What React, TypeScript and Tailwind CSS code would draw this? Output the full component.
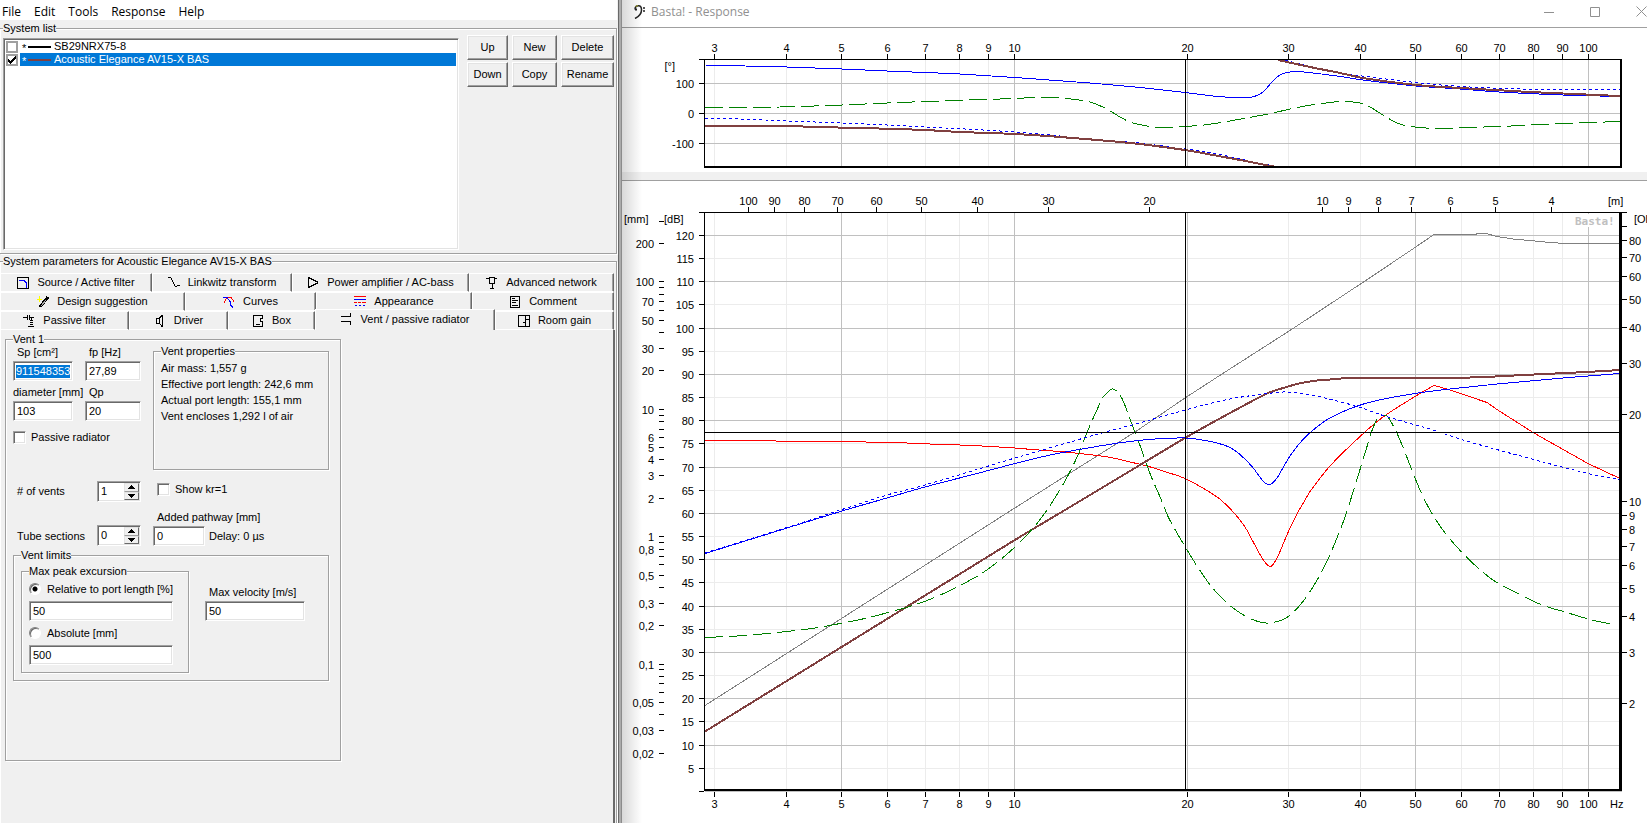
import {type ReactNode, useState} from "react";

const BEVEL_IN = "border border-t-[#a0a0a0] border-l-[#a0a0a0] border-r-white border-b-white shadow-[inset_1px_1px_0_#696969,inset_-1px_-1px_0_#e3e3e3] bg-white";
const BEVEL_OUT = "border border-t-white border-l-white border-r-[#696969] border-b-[#696969] shadow-[inset_-1px_-1px_0_#a0a0a0,inset_1px_1px_0_#e3e3e3] bg-[#f0f0f0]";
const ETCHED = "border border-[#a0a0a0] shadow-[1px_1px_0_#fff,inset_1px_1px_0_#fff]";

const MENU = ["File", "Edit", "Tools", "Response", "Help"];

/* ---------- form pieces ---------- */

type GroupProps = { title: string; className: string; children: ReactNode };

const Group = ({title, className, children}: GroupProps) => (
    <fieldset className={`min-w-0 ${ETCHED} ${className}`}>
        <legend className="h-3 bg-[#f0f0f0] leading-3 whitespace-nowrap">{title}</legend>
        {children}
    </fieldset>
);

type FieldProps = { id: string; label: string; value: string; width: string; indent?: boolean };

const Field = ({id, label, value, width, indent}: FieldProps) => (
    <div className={`flex flex-col gap-[2px] ${width}`}>
        <label htmlFor={id} className={`h-[14px] leading-[14px] whitespace-nowrap ${indent ? "pl-1" : ""}`}>{label}</label>
        <input id={id} defaultValue={value} className={`h-5 w-full px-[3px] outline-none ${BEVEL_IN}`}/>
    </div>
);

const Check = ({id, label}: { id: string; label: string }) => (
    <div className="flex h-[13px] items-center gap-[5px]">
        <input id={id} type="checkbox" className={`size-[13px] appearance-none ${BEVEL_IN}`}/>
        <label htmlFor={id}>{label}</label>
    </div>
);

const Radio = ({id, label, on}: { id: string; label: string; on?: boolean }) => (
    <div className="flex h-[14px] items-center gap-[6px]">
        <input
            id={id}
            type="radio"
            name="excursion"
            defaultChecked={on}
            className="size-3 appearance-none rounded-full border border-t-[#808080] border-l-[#808080] border-r-white border-b-white bg-white shadow-[inset_1px_1px_0_#696969] checked:bg-[radial-gradient(circle,#000_2px,#fff_3px)]"
        />
        <label htmlFor={id}>{label}</label>
    </div>
);

const Spinner = ({id, value}: { id: string; value: number }) => {
    const [count, setCount] = useState(value);

    return (
        <div className={`flex h-[21px] w-11 p-px ${BEVEL_IN}`}>
            <input
                id={id}
                value={count}
                onChange={(e) => setCount(Number(e.target.value) || 0)}
                className="w-[25px] pl-[2px] outline-none"
            />
            <div className="flex w-[15px] flex-col">
                <button type="button" aria-label="More" onClick={() => setCount(count + 1)} className="flex flex-1 items-center justify-center border border-[#e3e3e3] border-r-[#696969] border-b-[#a0a0a0] bg-[#f0f0f0]">
                    <svg width="7" height="4" shapeRendering="crispEdges"><path d="M3 0h1v1h1v1h1v1h1v1H0V3h1V2h1V1h1z"/></svg>
                </button>
                <button type="button" aria-label="Less" onClick={() => setCount(Math.max(0, count - 1))} className="flex flex-1 items-center justify-center border border-[#e3e3e3] border-r-[#696969] border-b-[#696969] bg-[#f0f0f0]">
                    <svg width="7" height="4" shapeRendering="crispEdges"><path d="M0 0h7v1H6v1H5v1H4v1H3V3H2V2H1V1H0z"/></svg>
                </button>
            </div>
        </div>
    );
};

/* ---------- system list ---------- */

const SystemRow = ({id, name, color, on}: { id: string; name: string; color: string; on: boolean }) => (
    <li className="flex h-[13px] items-center gap-[2px]">
        <input id={id} type="checkbox" defaultChecked={on} className="size-3 appearance-none border-2 border-[#a0a0a0] bg-white"/>
        {on && (
            <svg width="8" height="8" shapeRendering="crispEdges" className="pointer-events-none -ml-3 mr-[2px]">
                <path d="M0 3h1v1h1v1h1V4h1V3h1V2h1V1h1V0h1v3H7v1H6v1H5v1H4v1H3v1H2V7H1V6H0z"/>
            </svg>
        )}
        <label htmlFor={id} className={`flex h-[13px] flex-1 items-center leading-[13px] ${on ? "bg-[#0078d7] text-white" : ""}`}>
            <span className="w-2 pt-[3px] pl-[2px]">*</span>
            <svg width="26" height="2" shapeRendering="crispEdges"><path d="M0 1h23" stroke={color} strokeWidth="2"/></svg>
            {name}
        </label>
    </li>
);

const LIST_BUTTONS = ["Up", "New", "Delete", "Down", "Copy", "Rename"];

/* ---------- tabs ---------- */

const ICONS: Record<string, ReactNode> = {
    source: <><path d="M.5.5h11v11H.5z" stroke="#000"/><path d="M2 3.500h5l2 2v2l1 3" stroke="#00f"/></>,
    linkwitz: <path d="M0 .5h2.500l2 3 2 5 1 1h1.500M9 8.500h3" stroke="#000"/>,
    amp: <path d="M1.500.5v10M1.500.5l9 4.500v1l-9 4.500" stroke="#000"/>,
    network: <path d="M0 1.500h3M3.500.5h5v6h-5zM9 1.500h2M6.500 6v5M4 11.500h4" stroke="#000"/>,
    wand: <><path d="M3 11 11 1" stroke="#000" strokeWidth="3"/><path d="M4 10 9 4" stroke="#aaa"/><path d="M2.500 0v6M0 3.500h5" stroke="#ff0"/></>,
    curves: <><path d="M1 6.500 4 1.500h4l3 4" stroke="#f00"/><path d="M0 1.500h4l3 4v3l3 3" stroke="#00f"/></>,
    appearance: <><path d="M0 .5h12M0 6.500h3m1 0h3m1 0h4" stroke="#f00"/><path d="M0 3.500h12M1 9.500h2m2 0h2m2 0h2" stroke="#00f"/></>,
    comment: <path d="M1.500.5h9v11h-9zM3 2.500h3M3 4.500h6M3 6.500h4M3 9.500h6" stroke="#000"/>,
    passive: <path d="M0 2.500h4M4.500 0v5M6.500 0v5M7 2.500h4M8.500 3v2M7 5.500h3M7 7.500h3M7 9.500h3M5 11.500h6" stroke="#000"/>,
    driver: <path d="M2.500 3.500h3v5h-3zM5.500 3 8 .5v11L5.500 8.500" stroke="#000"/>,
    box: <path d="M1.500.5h9v3h-2v3h2v5h-9zM4 9.500h4" stroke="#000"/>,
    vent: <path d="M9.500 0v4M0 3.500h10M0 8.500h10M9.500 8v4" stroke="#000"/>,
    room: <path d="M.5.5h11v11H.5zM7.500 0v12M8 4.500h4M5 7.500h3" stroke="#000"/>,
};

const TABS = [
    [
        {icon: "source", title: "Source / Active filter", width: "basis-[152px]"},
        {icon: "linkwitz", title: "Linkwitz transform", width: "basis-[140px]"},
        {icon: "amp", title: "Power amplifier / AC-bass", width: "basis-[177px]"},
        {icon: "network", title: "Advanced network", width: "basis-[145px]"},
    ],
    [
        {icon: "wand", title: "Design suggestion", width: "basis-[185px]"},
        {icon: "curves", title: "Curves", width: "basis-[131px]"},
        {icon: "appearance", title: "Appearance", width: "basis-[156px]"},
        {icon: "comment", title: "Comment", width: "basis-[142px]"},
    ],
    [
        {icon: "passive", title: "Passive filter", width: "basis-[129px]"},
        {icon: "driver", title: "Driver", width: "basis-[99px]"},
        {icon: "box", title: "Box", width: "basis-[87px]"},
        {icon: "vent", title: "Vent / passive radiator", width: "basis-[180px]", active: true},
        {icon: "room", title: "Room gain", width: "basis-[119px]"},
    ],
];

const Tabs = () => (
    <div role="tablist" className="mr-[2px] pt-[6px]">
        {TABS.map((row, i) => (
            <div key={i} className="flex h-[19px]">
                {row.map((tab) => (
                    <button
                        key={tab.title}
                        type="button"
                        role="tab"
                        aria-selected={!!tab.active}
                        className={`flex shrink grow items-center justify-center gap-2 border-t border-l border-r border-white border-r-[#696969] shadow-[inset_-1px_0_0_#a0a0a0] whitespace-nowrap ${tab.width} ${tab.active ? "-mt-[2px] bg-[#f0f0f0] pb-[2px]" : "border-b"}`}
                    >
                        <svg width="12" height="12" fill="none" shapeRendering="crispEdges">{ICONS[tab.icon]}</svg>
                        <span>{tab.title}</span>
                    </button>
                ))}
            </div>
        ))}
    </div>
);

/* ---------- vent page ---------- */

const VentPage = () => (
    <div className="mr-px flex-1 border-r-2 border-[#696969] pt-[3px] pl-[5px]">
        <Group title="Vent 1" className="h-[428px] w-[336px] px-[7px]">
            <div className="flex gap-3">
                <div className="w-32">
                    <div className="flex flex-wrap gap-x-3 gap-y-1">
                        <div className="flex w-[60px] flex-col gap-[2px]">
                            <label htmlFor="sp" className="h-[14px] pl-1 leading-[14px]">Sp [cm²]</label>
                            <div className={`flex h-5 w-full items-center px-[2px] ${BEVEL_IN}`}>
                                <input id="sp" defaultValue="911548353" className="h-[13px] w-full bg-[#0078d7] text-white outline-none"/>
                            </div>
                        </div>
                        <Field id="fp" label="fp [Hz]" value="27,89" width="w-14" indent/>
                        <Field id="diameter" label="diameter [mm]" value="103" width="w-[60px]"/>
                        <Field id="qp" label="Qp" value="20" width="w-14" indent/>
                    </div>
                    <div className="mt-[10px]"><Check id="passive" label="Passive radiator"/></div>
                </div>
                <Group title="Vent properties" className="h-[125px] w-44 px-[7px]">
                    <div className="pt-[3px] leading-4 whitespace-nowrap">
                        <p>Air mass: 1,557 g</p>
                        <p>Effective port length: 242,6 mm</p>
                        <p>Actual port length: 155,1 mm</p>
                        <p>Vent encloses 1,292 l of air</p>
                    </div>
                </Group>
            </div>

            <div className="mt-[11px] flex items-center">
                <label htmlFor="vents" className="w-[84px] pl-1"># of vents</label>
                <Spinner id="vents" value={1}/>
                <div className="pl-4 pb-1"><Check id="kr" label="Show kr=1"/></div>
            </div>

            <div className="mt-2 flex items-end">
                <label htmlFor="sections" className="w-[84px] pl-1 leading-5">Tube sections</label>
                <Spinner id="sections" value={0}/>
                <div className="pl-3"><Field id="pathway" label="Added pathway [mm]" value="0" width="w-[52px]" indent/></div>
                <span className="pl-1 leading-5">Delay: 0 µs</span>
            </div>

            <Group title="Vent limits" className="mt-[3px] h-[132px] w-[316px] px-[7px]">
                <div className="flex gap-4 pt-1">
                    <Group title="Max peak excursion" className="h-[108px] w-[168px] px-[7px]">
                        <div className="flex flex-col gap-[5px] pt-[5px]">
                            <Radio id="relative" label="Relative to port length [%]" on/>
                            <input aria-label="Relative to port length" defaultValue="50" className={`h-5 w-36 px-[3px] outline-none ${BEVEL_IN}`}/>
                            <Radio id="absolute" label="Absolute [mm]"/>
                            <input aria-label="Absolute" defaultValue="500" className={`h-5 w-36 px-[3px] outline-none ${BEVEL_IN}`}/>
                        </div>
                    </Group>
                    <div className="pt-5"><Field id="velocity" label="Max velocity [m/s]" value="50" width="w-[100px]" indent/></div>
                </div>
            </Group>
        </Group>
    </div>
);

const MainWindow = () => (
    <div className="flex w-[619px] shrink-0 flex-col border-r border-[#696969] bg-[#f0f0f0] pr-px">
        <nav className="flex h-5 items-center gap-[13px] bg-white pt-1 pl-[2px] font-['Open_Sans',sans-serif] text-xs leading-4">
            {MENU.map((item) => <button key={item} type="button">{item}</button>)}
        </nav>

        <Group title="System list" className="mt-[2px] h-[232px] border-l-0 pl-[3px]">
            <div className="flex gap-2">
                <ul className={`mt-1 h-[212px] flex-1 px-[2px] pt-px ${BEVEL_IN}`}>
                    <SystemRow id="sys1" name="SB29NRX75-8" color="#000" on={false}/>
                    <SystemRow id="sys2" name="Acoustic Elegance AV15-X BAS" color="#804040" on/>
                </ul>
                <div className="mt-px mr-[2px] grid grid-cols-[41px_45px_53px] content-start gap-x-1 gap-y-[2px]">
                    {LIST_BUTTONS.map((name) => (
                        <button key={name} type="button" className={`h-[25px] ${BEVEL_OUT}`}>{name}</button>
                    ))}
                </div>
            </div>
        </Group>

        <fieldset className={`mt-px flex min-w-0 flex-1 flex-col border-b-0 border-l-0 ${ETCHED}`}>
            <legend className="ml-[3px] h-3 bg-[#f0f0f0] leading-3">System parameters for Acoustic Elegance AV15-X BAS</legend>
            <div className="flex h-full flex-col">
                <Tabs/>
                <VentPage/>
            </div>
        </fieldset>
    </div>
);

/* ---------- response window ---------- */

const FREQS = [3, 4, 5, 6, 7, 8, 9, 10, 20, 30, 40, 50, 60, 70, 80, 90, 100];
const MAJOR_FREQS = [5, 10, 20, 50, 100];
const METRES = [100, 90, 80, 70, 60, 50, 40, 30, 20, 10, 9, 8, 7, 6, 5, 4];
const OHMS = [80, 70, 60, 50, 40, 30, 20, 10, 9, 8, 7, 6, 5, 4, 3, 2];
const MM_LABELS = ["200", "100", "70", "50", "30", "20", "10", "6", "5", "4", "3", "2", "1", "0,8", "0,5", "0,3", "0,2", "0,1", "0,05", "0,03", "0,02"];
const MM_TICKS = [300, 200, 100, ...[10, 1, 0.1].flatMap((d) => [9, 8, 7, 6, 5, 4, 3, 2, 1].map((n) => n * d)), 0.09, 0.08, 0.07, 0.06, 0.05, 0.04, 0.03, 0.02];

const snap = (v: number) => Math.floor(v) + 0.5;
const freqX = (f: number) => snap(1014.7 + 574 * Math.log10(f / 10));
const degY = (d: number) => snap(113.5 - 0.3 * d);
const dbY = (db: number) => snap(791.5 - 4.634 * db);
const mmY = (mm: number) => snap(536.7 - 127.4 * Math.log10(mm));
const ohmY = (ohm: number) => snap(501.8 - 289 * Math.log10(ohm / 10));

const PHASE = {
    maroonLow: "705,126 787,126 815,127 862,128 895,129 925,130 960,132 1015,134 1060,137 1130,143 1185,150 1213,155 1240,160 1276,167",
    maroonHigh: "1278,60 1310,67 1340,73 1363,78 1416,85 1460,88 1530,92 1620,96",
    dotLow: "705,119 740,119 787,121 842,123 887,125 925,127 965,129 1015,132 1060,136 1100,140 1130,142 1185,149 1213,153 1240,159 1278,167",
    dotHigh: "1285,60 1300,64 1330,71 1370,77 1430,84 1470,87 1520,89 1560,89.500 1620,89.500",
    blue: "705,65 745,66 787,67 842,69 887,71 925,72.500 960,74 1015,77.500 1090,83 1130,86.500 1163,90 1185,92.500 1213,96 1233,97.500 1250,97.500 1258,95 1264,91 1273,81 1280,75 1287,72.500 1297,71.500 1313,73 1337,76 1363,80 1416,86 1460,89 1499,92 1563,95 1620,96.500",
    green: "705,108 780,107 842,105 887,103 940,101 985,99.500 1015,98.500 1035,97.500 1055,97.500 1075,99.500 1090,102 1105,108 1120,117 1130,122 1139,124.500 1155,127 1175,127 1185,126.500 1208,124.500 1241,119 1273,113 1290,109 1308,105.500 1330,102.500 1343,101.500 1360,103 1370,107 1378,112 1395,122 1403,125 1420,127.500 1440,128.500 1465,127.500 1500,126.500 1563,123.500 1620,121.500",
};

const LEVEL = {
    gray: "705,705.500 1014,508.500 1135,432 1185,398 1222,374 1293,328.500 1365,281 1415,247.500 1434,234.500 1476,234.500 1477,233.500 1486,233.500 1497,236.500 1513,239 1535,241 1550,242.500 1565,243.500 1620,243.500",
    maroon: "705,731.500 1014,540.500 1065,510 1130,471 1185,438 1230,413 1268,393 1280,389 1297,384 1313,381 1330,379.500 1350,378 1452,378 1495,376.500 1523,375 1587,372 1620,370",
    red: "705,440.500 838,441.500 893,442.500 930,444 960,445 982,446 1015,448 1032,449.500 1065,452 1108,457 1130,462 1147,466 1163,471 1185,478.500 1207,490.500 1221,500 1235,514 1245,527 1253,541.500 1262,558 1266,563.500 1270,566.500 1273,564.500 1278,556 1288,532.500 1297,514 1305,500 1310,491.500 1330,466 1360,436.500 1383,417 1420,393.500 1434,385.500",
    redTail: "1434,385.500 1447,389 1487,402.500 1497,409.500 1533,432.500 1588,463.500 1620,478.500",
    blue: "705,553.500 787,528 842,511 880,500 925,487 977,473.500 1015,463.500 1048,455.500 1082,449 1115,443.500 1130,441.500 1155,439 1185,438 1202,440 1217,443 1230,447.500 1240,454.500 1252,466.500 1263,481 1268,484.500 1272,483.500 1277,478 1290,456 1303,439.500 1320,424.500 1330,418 1353,407.500 1377,400.500 1415,393.500 1450,389 1497,384 1563,378 1620,373.500",
    dotted: "705,553 787,527.500 842,509.500 887,495 925,485 977,469.500 1015,458 1065,443.500 1100,433.500 1130,425.500 1150,420 1185,410 1230,399 1268,393.500 1283,392 1297,393 1323,397.500 1357,406.500 1383,415.500 1433,430 1463,440 1530,458.500 1588,473.500 1620,479.500",
    green: "705,637.500 745,635.500 787,631.500 818,627.500 865,618.500 888,612.500 913,605.500 938,596 962,584.500 986,570.500 1010,551.500 1032,529.500 1048,508.500 1065,481 1078,455 1088,430 1098,407.500 1102,398.500 1108,392 1112,389 1116,390.500 1122,398.500 1128,413.500 1135,432.500 1140,445.500 1150,473.500 1162,501.500 1168,516.500 1182,541.500 1197,566 1213,588.500 1230,605.500 1247,617 1262,622.500 1273,622.500 1287,617.500 1303,601.500 1318,578.500 1330,554.500 1343,522.500 1349,505 1360,469.500 1367,446.500 1372,430.500 1377,419.500 1382,415.500 1387,416 1392,423.500 1400,440 1420,490 1432,513.500 1447,535.500 1470,560.500 1493,580 1517,593 1542,605 1565,612 1590,619.500 1613,624.500",
};

// cubic through all points, tangents taken from the neighbours
const smoothPath = (points: string) => {
    const p = points.split(" ").map((pair) => pair.split(",").map(Number));
    const slope = (i: number) => {
        const a = p[Math.max(0, i - 1)];
        const b = p[Math.min(p.length - 1, i + 1)];
        return (b[1] - a[1]) / (b[0] - a[0]);
    };

    return p.slice(1).reduce((d, [x, y], i) => {
        const [px, py] = p[i];
        const h = (x - px) / 3;
        return `${d}C${px + h} ${py + slope(i) * h} ${x - h} ${y - slope(i + 1) * h} ${x} ${y}`;
    }, `M${p[0][0]} ${p[0][1]}`);
};

type CurveProps = { points: string; color: string; width?: number; dash?: string; straight?: boolean };

const Curve = ({points, color, width = 1, dash, straight}: CurveProps) => (
    <path
        d={straight ? `M${points}` : smoothPath(points)}
        fill="none"
        stroke={color}
        strokeWidth={width}
        strokeDasharray={dash}
        shapeRendering="crispEdges"
    />
);

const PhaseChart = () => (
    <svg viewBox="622 28 1025 144" className="block h-auto w-full">
        <g shapeRendering="crispEdges">
            {FREQS.map((f) => (
                <path key={f} d={`M${freqX(f)} 60V166`} stroke={MAJOR_FREQS.includes(f) ? "#c0c0c0" : "#ececec"}/>
            ))}
            {[100, 0, -100].map((d) => <path key={d} d={`M705 ${degY(d)}H1620`} stroke="#c0c0c0"/>)}
        </g>
        <Curve points={PHASE.green} color="#008000" dash="18 6"/>
        <Curve points={PHASE.dotLow} color="#0000ff" dash="3 3"/>
        <Curve points={PHASE.dotHigh} color="#0000ff" dash="3 3"/>
        <Curve points={PHASE.blue} color="#0000ff"/>
        <Curve points={PHASE.maroonLow} color="#804040" width={2}/>
        <Curve points={PHASE.maroonHigh} color="#804040" width={2}/>
        <g stroke="#000" shapeRendering="crispEdges">
            <path d="M699 59.500H1621M704.500 59V167M1185.500 60V166"/>
            <path d="M704 167H1622M1621 59V168" strokeWidth="2"/>
            {FREQS.map((f) => <path key={f} d={`M${freqX(f)} 54V59`}/>)}
            {[100, 0, -100].map((d) => <path key={d} d={`M699 ${degY(d)}H704`}/>)}
        </g>
        <g textAnchor="middle">
            {FREQS.map((f) => <text key={f} x={freqX(f)} y="52">{f}</text>)}
        </g>
        <g textAnchor="end">
            {[100, 0, -100].map((d) => <text key={d} x="694" y={degY(d) + 4}>{d}</text>)}
            <text x="675" y="70">[°]</text>
        </g>
    </svg>
);

const DB_STEPS = Array.from({length: 24}, (_, i) => 120 - i * 5);

const LevelChart = () => (
    <svg viewBox="622 181 1025 642" className="block h-auto w-full">
        <g shapeRendering="crispEdges">
            {DB_STEPS.filter((db) => db % 10).map((db) => <path key={db} d={`M705 ${dbY(db)}H1621`} stroke="#ececec"/>)}
            {FREQS.map((f) => (
                <path key={f} d={`M${freqX(f)} 213V790`} stroke={MAJOR_FREQS.includes(f) ? "#c0c0c0" : "#ececec"}/>
            ))}
            {DB_STEPS.filter((db) => db % 10 === 0).map((db) => <path key={db} d={`M705 ${dbY(db)}H1621`} stroke="#c0c0c0"/>)}
        </g>
        <rect x="1573" y="214" width="44" height="13" fill="#fff"/>
        <text x="1575" y="225" fill="#c0c0c0" className="font-['DejaVu_Sans_Mono',monospace] font-bold">Basta!</text>
        <Curve points={LEVEL.gray} color="#808080" straight/>
        <Curve points={LEVEL.red} color="#ff0000"/>
        <Curve points={LEVEL.redTail} color="#ff0000" straight/>
        <Curve points={LEVEL.maroon} color="#804040" width={2}/>
        <Curve points={LEVEL.green} color="#008000" dash="18 6"/>
        <Curve points={LEVEL.dotted} color="#0000ff" dash="3 3"/>
        <Curve points={LEVEL.blue} color="#0000ff"/>
        <g stroke="#000" shapeRendering="crispEdges">
            <path d="M699 212.500H1621M704.500 212V791M1185.500 213V791M705 432.500H1620M699 791.500H704"/>
            <path d="M704 790H1622" strokeWidth="2"/>
            <path d="M1620.500 212V791" strokeWidth="3"/>
            <path d="M705 791.500H1622" stroke="#c0c0c0"/>
            {FREQS.map((f) => <path key={f} d={`M${freqX(f)} 792V797`}/>)}
            {METRES.map((m) => <path key={m} d={`M${freqX(344 / m)} 207V212`}/>)}
            {DB_STEPS.map((db) => <path key={db} d={`M699 ${dbY(db)}H704`}/>)}
            {MM_TICKS.map((mm) => <path key={mm} d={`M659 ${mmY(mm)}H664`}/>)}
            {[100, 90, ...OHMS].map((ohm) => <path key={ohm} d={`M1622 ${ohmY(ohm)}H1627`}/>)}
        </g>
        <g textAnchor="middle">
            {FREQS.map((f) => <text key={f} x={freqX(f)} y="808">{f}</text>)}
            {METRES.map((m) => <text key={m} x={freqX(344 / m)} y="205">{m}</text>)}
        </g>
        <g textAnchor="end">
            {DB_STEPS.map((db) => <text key={db} x="694" y={dbY(db) + 4}>{db}</text>)}
            {MM_LABELS.map((mm) => <text key={mm} x="654" y={mmY(Number(mm.replace(",", "."))) + 4}>{mm}</text>)}
        </g>
        {OHMS.map((ohm) => <text key={ohm} x="1629" y={ohmY(ohm) + 4}>{ohm}</text>)}
        <text x="624" y="223">[mm]</text>
        <text x="664" y="223">[dB]</text>
        <text x="1608" y="205">[m]</text>
        <text x="1634" y="223">[Ohm]</text>
        <text x="1610" y="808">Hz</text>
    </svg>
);

const ResponseWindow = () => (
    <div className="relative min-w-0 flex-1 overflow-hidden bg-white">
        <div className="flex h-[27px] items-center justify-between">
            <div className="flex items-center gap-[6px] pb-[3px] pl-3 font-['Open_Sans',sans-serif] text-xs text-[#909090]">
                <svg width="11" height="14" viewBox="0 0 11 14" fill="none" stroke="#222">
                    <path d="M1 4.500C1 1.500 3 .8 4.500.8 7 .8 7.500 3 7.500 5 7.500 9 5 11.500 1 13.500" strokeWidth="1.500"/>
                    <path d="M1 4.500h2" strokeWidth="2"/>
                    <path d="M9 3h2M9 6h2" strokeWidth="1.500"/>
                    <path d="M1.500 1.500 4 .5" stroke="#a8a820"/>
                </svg>
                <span>Basta! - Response</span>
            </div>
            <div className="-mr-[17px] flex pb-1">
                <button type="button" aria-label="Minimize" className="flex w-[46px] items-center justify-center">
                    <svg width="10" height="10" stroke="#909090"><path d="M0 5.500h10"/></svg>
                </button>
                <button type="button" aria-label="Maximize" className="flex w-[46px] items-center justify-center">
                    <svg width="10" height="10" stroke="#909090" fill="none"><path d="M.5.5h9v9h-9z"/></svg>
                </button>
                <button type="button" aria-label="Close" className="flex w-[46px] items-center justify-center">
                    <svg width="11" height="11" stroke="#909090"><path d="M.5.5l10 10M10.500.5l-10 10"/></svg>
                </button>
            </div>
        </div>
        <div className="border-t border-[#a0a0a0]"><PhaseChart/></div>
        <div className="h-2 bg-[#f0f0f0]"/>
        <div className="border-t border-[#a0a0a0]"><LevelChart/></div>
        <div className="pointer-events-none absolute inset-y-0 left-0 w-5 bg-linear-to-r from-black/15 to-transparent"/>
    </div>
);

const App = () => (
    <div className="flex min-h-screen overflow-hidden bg-[#f0f0f0] font-['Liberation_Sans',Arial,sans-serif] text-[11px] leading-[13px] text-black">
        <MainWindow/>
        {/* sliver of the desktop between the two windows */}
        <div className="w-[3px] shrink-0 border-r border-[#8c8c8c] bg-[#ababab]"/>
        <ResponseWindow/>
    </div>
);

export default App;
